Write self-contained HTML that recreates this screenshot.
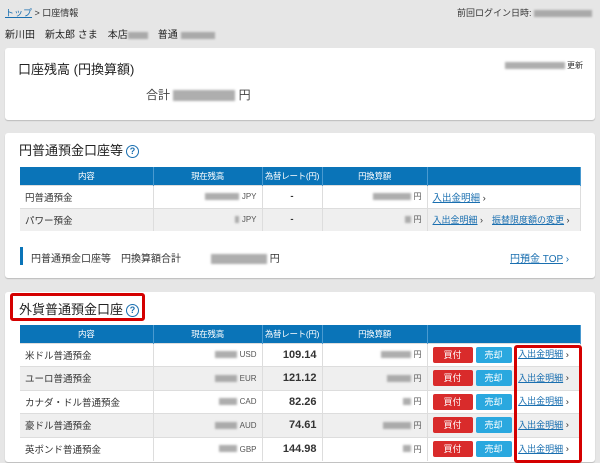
<!DOCTYPE html>
<html><head><meta charset="utf-8"><style>
*{box-sizing:border-box;margin:0;padding:0}
body{width:600px;height:460px;overflow:hidden;background:#e6e6e6;font-family:"Liberation Sans","Noto Sans CJK JP",sans-serif;color:#333;position:relative;font-size:10px}
.abs{position:absolute}
.card{position:absolute;left:5px;width:590px;background:#fff;border-radius:3px;box-shadow:0 1px 1px #bbb}
.blur{display:inline-block;background:#9a9a9a;height:7px;filter:blur(1px);vertical-align:middle;opacity:.8}
table{position:absolute;left:20px;width:561px;border-collapse:collapse;font-size:9.5px;table-layout:fixed}
th{background:#0a74b8;color:#fff;font-weight:normal;height:18px;border-right:1px solid #4a9ad0;font-size:8.5px;white-space:nowrap;padding:0;letter-spacing:-0.3px}
td{border-right:1px solid #ddd;border-top:1px solid #ddd;padding:0 5px;white-space:nowrap;overflow:hidden}
tr.g td{background:#efefef}
.r{text-align:right}
.c{text-align:center}
a{color:#1a6fb0;text-decoration:underline}
.btn{display:inline-block;height:16px;line-height:16px;color:#fff;text-align:center;border-radius:2px;font-size:9px;vertical-align:middle}
.buy{background:#d92b2b;width:40px}.sell{background:#2aa8df;width:36px;margin-left:3px}
.q{display:inline-block;width:13px;height:13px;border:1.5px solid #1a6fb0;border-radius:50%;color:#1a6fb0;font-size:9px;text-align:center;line-height:10px;font-weight:bold;vertical-align:middle;margin-left:3px}
.cur{font-size:8px;color:#555}
.rate{font-weight:bold;font-size:11px;color:#333}
</style></head><body>
<div class="abs" style="left:5px;top:6px;font-size:9px"><a>トップ</a> &gt; 口座情報</div>
<div class="abs" style="right:8px;top:6px;font-size:9px">前回ログイン日時: <span class="blur" style="width:58px"></span></div>
<div class="abs" style="left:5px;top:26px;font-size:10px;color:#222">新川田　新太郎 さま　本店<span class="blur" style="width:20px"></span>　普通 <span class="blur" style="width:34px"></span></div>

<div class="card" style="top:48px;height:72px">
<div class="abs" style="left:13px;top:11px;font-size:13px;color:#222">口座残高 (円換算額)</div>
<div class="abs" style="right:12px;top:12px;font-size:8px"><span class="blur" style="width:60px"></span> 更新</div>
<div class="abs" style="left:141px;top:38px;font-size:12px;color:#444">合計 <span class="blur" style="width:62px;height:11px"></span> 円</div>
</div>

<div class="card" style="top:133px;height:145px">
<div class="abs" style="left:14px;top:7px;font-size:13px;color:#222">円普通預金口座等<span class="q">?</span></div>
<div class="abs" style="left:15px;top:114px;width:3px;height:18px;background:#0a74b8"></div>
<div class="abs" style="left:26px;top:117px;font-size:10px">円普通預金口座等　円換算額合計　　　<span class="blur" style="width:56px;height:10px"></span> 円</div>
<div class="abs" style="left:505px;top:117px;font-size:10px"><a>円預金 TOP</a> <span style="color:#1a6fb0">›</span></div>
</div>
<table style="top:167px">
<colgroup><col style="width:133px"><col style="width:109px"><col style="width:60px"><col style="width:105px"><col></colgroup>
<tr><th>内容</th><th>現在残高</th><th>為替レート(円)</th><th>円換算額</th><th></th></tr>
<tr style="height:23px"><td>円普通預金</td><td class="r"><span class="blur" style="width:34px"></span> <span class="cur">JPY</span></td><td class="c"><b>-</b></td><td class="r"><span class="blur" style="width:38px"></span> <span class="cur">円</span></td><td><a>入出金明細</a> ›</td></tr>
<tr class="g" style="height:23px"><td>パワー預金</td><td class="r"><span class="blur" style="width:4px"></span> <span class="cur">JPY</span></td><td class="c"><b>-</b></td><td class="r"><span class="blur" style="width:6px"></span> <span class="cur">円</span></td><td style="font-size:9px"><a>入出金明細</a> ›　<a>振替限度額の変更</a> ›</td></tr>
</table>

<div class="card" style="top:292px;height:170px">
<div class="abs" style="left:14px;top:7px;font-size:13px;color:#222">外貨普通預金口座<span class="q">?</span></div>
</div>
<div class="abs" style="left:10px;top:293px;width:135px;height:28px;border:3px solid #d40000;border-radius:3px"></div>
<table style="top:325px">
<colgroup><col style="width:133px"><col style="width:109px"><col style="width:60px"><col style="width:105px"><col></colgroup>
<tr><th>内容</th><th>現在残高</th><th>為替レート(円)</th><th>円換算額</th><th></th></tr>
<tr style="height:23.5px"><td>米ドル普通預金</td><td class="r"><span class="blur" style="width:22px"></span> <span class="cur">USD</span></td><td class="r rate">109.14</td><td class="r"><span class="blur" style="width:30px"></span> <span class="cur">円</span></td><td><span class="btn buy">買付</span><span class="btn sell">売却</span> <a style="font-size:9px;margin-left:4px">入出金明細</a> ›</td></tr>
<tr class="g" style="height:23.5px"><td>ユーロ普通預金</td><td class="r"><span class="blur" style="width:22px"></span> <span class="cur">EUR</span></td><td class="r rate">121.12</td><td class="r"><span class="blur" style="width:24px"></span> <span class="cur">円</span></td><td><span class="btn buy">買付</span><span class="btn sell">売却</span> <a style="font-size:9px;margin-left:4px">入出金明細</a> ›</td></tr>
<tr style="height:23.5px"><td>カナダ・ドル普通預金</td><td class="r"><span class="blur" style="width:18px"></span> <span class="cur">CAD</span></td><td class="r rate">82.26</td><td class="r"><span class="blur" style="width:8px"></span> <span class="cur">円</span></td><td><span class="btn buy">買付</span><span class="btn sell">売却</span> <a style="font-size:9px;margin-left:4px">入出金明細</a> ›</td></tr>
<tr class="g" style="height:23.5px"><td>豪ドル普通預金</td><td class="r"><span class="blur" style="width:22px"></span> <span class="cur">AUD</span></td><td class="r rate">74.61</td><td class="r"><span class="blur" style="width:28px"></span> <span class="cur">円</span></td><td><span class="btn buy">買付</span><span class="btn sell">売却</span> <a style="font-size:9px;margin-left:4px">入出金明細</a> ›</td></tr>
<tr style="height:23.5px"><td>英ポンド普通預金</td><td class="r"><span class="blur" style="width:18px"></span> <span class="cur">GBP</span></td><td class="r rate">144.98</td><td class="r"><span class="blur" style="width:8px"></span> <span class="cur">円</span></td><td><span class="btn buy">買付</span><span class="btn sell">売却</span> <a style="font-size:9px;margin-left:4px">入出金明細</a> ›</td></tr>
</table>
<div class="abs" style="left:514px;top:345px;width:68px;height:118px;border:3px solid #d40000;border-radius:3px"></div>
</body></html>
